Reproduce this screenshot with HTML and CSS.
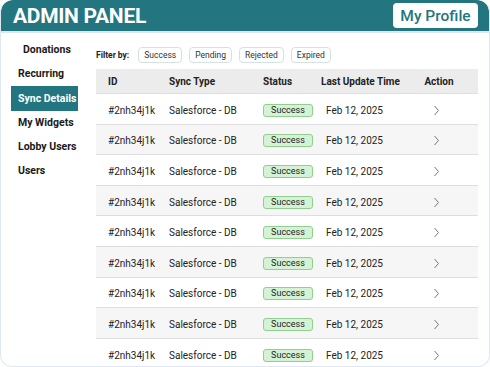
FILE: index.html
```html
<!DOCTYPE html>
<html lang="en">
<head>
    <meta charset="UTF-8">
    <meta name="viewport" content="width=device-width, initial-scale=1.0">
    <title>Admin Panel</title>
    <link rel="stylesheet" href="styles.css">
</head>
<body>
    <div class="panel">
        <div class="topbar">
            <div class="title">ADMIN PANEL</div>
            <button class="profile-btn">My Profile</button>
        </div>

        <div class="layout">
            <div class="sidebar">
                <div class="nav-item first">Donations</div>
                <div class="nav-item">Recurring</div>
                <div class="nav-item active">Sync Details</div>
                <div class="nav-item">My Widgets</div>
                <div class="nav-item">Lobby Users</div>
                <div class="nav-item">Users</div>
            </div>

            <div class="content">
                <div class="filters">
                    <span class="filter-label">Filter by:</span>
                    <span class="chip">Success</span>
                    <span class="chip">Pending</span>
                    <span class="chip">Rejected</span>
                    <span class="chip">Expired</span>
                </div>

                <div class="grid head">
                    <div>ID</div>
                    <div>Sync Type</div>
                    <div>Status</div>
                    <div class="col-date">Last Update Time</div>
                    <div class="col-action">Action</div>
                </div>
                <div id="sync-rows"></div>
            </div>
        </div>
    </div>

    <script>
        const rows = document.getElementById("sync-rows");
        for (let i = 0; i < 9; i++) {
            const row = document.createElement("div");
            row.className = "grid row" + (i % 2 ? " alt" : "");
            row.innerHTML = `
                <div>#2nh34j1k</div>
                <div>Salesforce - DB</div>
                <div><span class="badge">Success</span></div>
                <div class="col-date">Feb 12, 2025</div>
                <div class="col-action">
                    <svg width="7" height="11" viewBox="0 0 7 11"><path d="M1.5 1 L5.5 5.5 L1.5 10" fill="none" stroke="#777" stroke-width="1"/></svg>
                </div>
            `;
            rows.appendChild(row);
        }
    </script>
</body>
</html>
```

FILE: styles.css
```css
body {
    font-family: Roboto, 'Liberation Sans', sans-serif;
    margin: 0;
    padding: 0;
    background: white;
    color: #222;
}

.panel {
    height: 367px;
    box-sizing: border-box;
    border: 1px solid #dfe8f2;
    border-top: none;
    border-radius: 12px;
    overflow: hidden;
}

.topbar {
    background: #23757f;
    height: 31px;
    border-bottom: 2px solid #dbe8ef;
    border-radius: 12px 12px 0 0;
    display: flex;
    align-items: center;
    justify-content: space-between;
    padding: 0 11px 0 12px;
}
.title {
    color: white;
    font-size: 21px;
    font-weight: bold;
    letter-spacing: -0.3px;
}
.profile-btn {
    background: white;
    color: #23757f;
    border: none;
    border-radius: 4px;
    width: 85px;
    height: 25px;
    font-family: inherit;
    font-size: 15.5px;
    font-weight: 500;
    padding: 0;
}

.layout {
    display: flex;
}

.sidebar {
    width: 95px;
    padding-top: 5px;
}
.nav-item {
    height: 24px;
    line-height: 24px;
    margin-left: 10px;
    width: 67px;
    padding-left: 7px;
    box-sizing: border-box;
    font-size: 10.5px;
    font-weight: bold;
    color: #1a1a1a;
}
.nav-item.first {
    padding-left: 12px;
}
.nav-item.active {
    background: #23757f;
    color: white;
    height: 25px;
    line-height: 25px;
}

.content {
    width: 382px;
}

.filters {
    display: flex;
    align-items: center;
    gap: 7px;
    height: 16px;
    margin-top: 14px;
    margin-bottom: 6px;
}
.filter-label {
    font-size: 8.5px;
    font-weight: bold;
    margin-right: 2px;
}
.chip {
    height: 16px;
    line-height: 15px;
    box-sizing: border-box;
    padding: 0 5px;
    border: 1px solid #d3e2e2;
    border-radius: 4px;
    font-size: 8.5px;
    color: #333;
}

.grid {
    display: grid;
    grid-template-columns: 61px 94px 62px 97px 1fr;
    align-items: center;
}
.grid > div {
    padding-left: 12px;
}
.grid .col-action {
    padding-left: 0;
    display: flex;
    justify-content: center;
    padding-right: 10px;
}

.head {
    background: #ececec;
    height: 24px;
    font-size: 10px;
    font-weight: bold;
}
.head .col-date {
    padding-left: 8px;
}

.row {
    height: 30.6px;
    box-sizing: border-box;
    border-top: 1.5px solid #dedede;
    font-size: 10px;
}
.row.alt {
    background: #f6f6f6;
}
.row > div {
    padding-top: 3px;
}
.row .col-action {
    padding-right: 16px;
}
.row .col-date {
    padding-left: 13px;
}

.badge {
    display: inline-block;
    width: 50px;
    height: 13px;
    line-height: 11px;
    box-sizing: border-box;
    text-align: center;
    background: #d5f2d5;
    border: 1px solid #8fd08f;
    border-radius: 3px;
    font-size: 9px;
    color: #222;
}
```
